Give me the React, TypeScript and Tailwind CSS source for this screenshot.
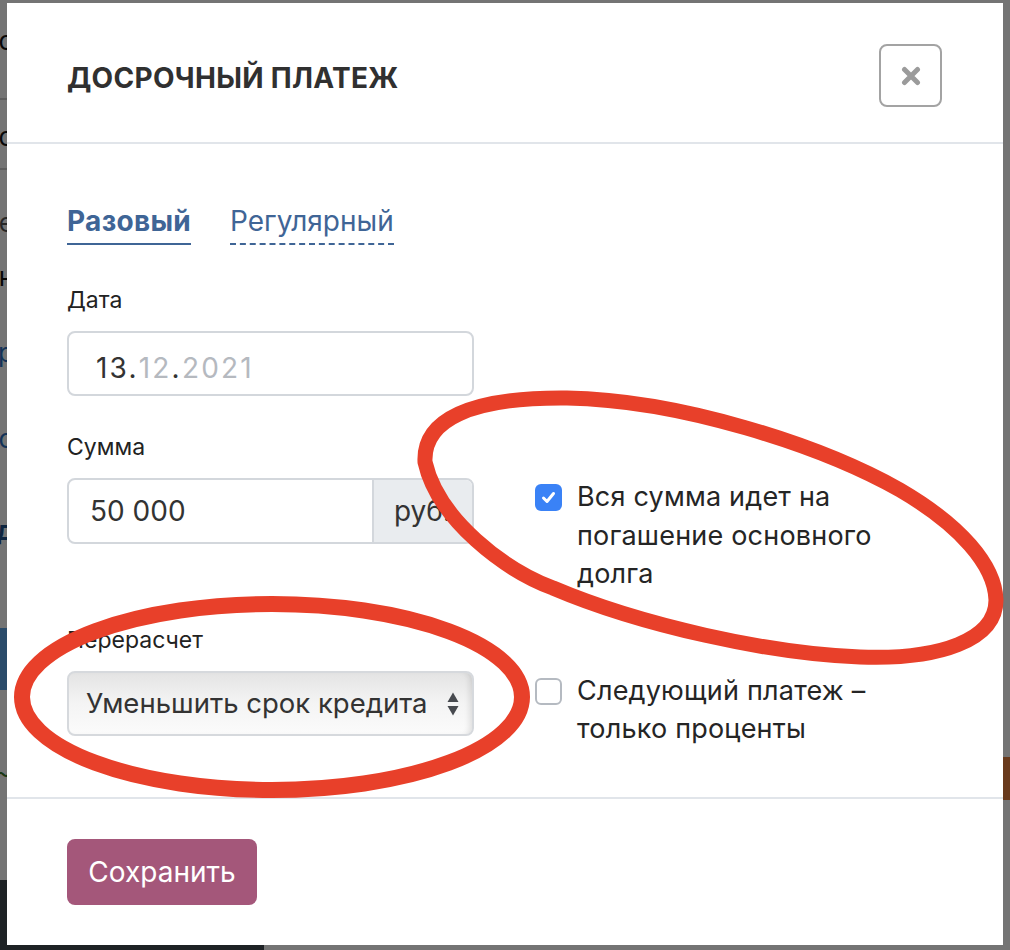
import React from "react";

function CloseIcon() {
  return (
    <svg width="20" height="20" viewBox="0 0 20 20">
      <path d="M3.5 3.5 L16.5 16.5 M16.5 3.5 L3.5 16.5" stroke="#9b9b9b" strokeWidth="5" strokeLinecap="round" />
    </svg>
  );
}

function SelectArrows() {
  return (
    <svg width="14" height="26" viewBox="0 0 14 26">
      <path d="M1.5 11 L7 1.5 L12.5 11 Z" fill="#474a4f" />
      <path d="M1.5 15 L12.5 15 L7 24.5 Z" fill="#474a4f" />
    </svg>
  );
}

function Annotations() {
  return (
    <svg className="pointer-events-none absolute left-0 top-0" width="1010" height="950" viewBox="0 0 1010 950">
      <path
        d="M425 462 C423 420 470 397 567 398 C680 400 820 445 900 490 C960 525 995 565 996 600 C996 640 940 660 860 657 C770 654 640 625 553 588 C505 570 438 520 425 462 Z"
        fill="none"
        stroke="#e8402a"
        strokeWidth="15"
      />
      <ellipse cx="272" cy="697" rx="250" ry="93" fill="none" stroke="#e8402a" strokeWidth="16" />
    </svg>
  );
}

export default function App() {
  return (
    <div className="relative h-[950px] w-[1010px] overflow-hidden bg-white font-['Inter','Noto_Sans',sans-serif] text-[#222]">
      {/* page behind the dialog */}
      <div className="flex h-[950px]">
        <div className="flex w-[264px] flex-col text-[26px] leading-none">
          <div className="flex h-[100px] justify-end border-b-2 border-[#cfcfcf] pr-[250px] pt-[28px] text-[#111]">со</div>
          <div className="flex h-[70px] justify-end border-b-2 border-[#cfcfcf] pr-[250px] pt-[24px] text-[#111]">о</div>
          <div className="flex h-[80px] justify-end pr-[250px] pt-[40px] text-[#555]">е</div>
          <div className="flex h-[60px] justify-end pr-[250px] pt-[14px] text-[#111]">н</div>
          <div className="flex h-[90px] justify-end pr-[250px] pt-[30px] text-[#2a6fc0]">р</div>
          <div className="flex h-[90px] justify-end pr-[250px] pt-[26px] text-[#2a6fc0]">о</div>
          <div className="flex h-[138px] justify-end pr-[250px] pt-[28px] font-bold text-[#1e4f8a]">д</div>
          <div className="h-[62px] bg-[#5ca6ea]" />
          <div className="flex h-[190px] justify-end pr-[252px] pt-[70px] text-[#3b7a2a]">~</div>
          <div className="flex-1 bg-[#434b52]" />
        </div>
        <div className="flex flex-1 flex-col">
          <div className="h-[880px]" />
          <div className="flex-1 border-t-2 border-[#333]" />
        </div>
        <div className="flex w-[20px] flex-col">
          <div className="h-[757px]" />
          <div className="h-[43px] rounded-l-[6px] bg-[#e6803e]" />
          <div className="flex-1" />
        </div>
      </div>

      {/* dimming backdrop */}
      <div className="absolute inset-0 bg-black/[0.545]" />

      {/* dialog */}
      <div className="absolute left-[7px] top-[3px] flex h-[942px] w-[996px] flex-col bg-white">
        <div className="flex h-[141px] shrink-0 items-center justify-between border-b-2 border-[#e1e5ea] pl-[60px] pr-[61px] pt-[6px]">
          <h2 className="mt-[5px] text-[28px] font-bold uppercase leading-[36px] tracking-[0.3px] text-[#303030]">
            Досрочный платеж
          </h2>
          <button className="flex h-[63px] w-[63px] items-center justify-center rounded-[8px] border-2 border-[#a3a3a3] bg-white">
            <CloseIcon />
          </button>
        </div>

        <div className="flex flex-1 gap-[61px] pl-[60px] pt-[60px]">
          <div className="flex w-[407px] flex-col">
            <div className="flex gap-[39px] text-[28px] leading-[34px] text-[#3f6596]">
              <span className="border-b-2 border-[#3f6596] pb-[5px] font-bold tracking-[0.3px]">Разовый</span>
              <span className="border-b-2 border-dashed border-[#3f6596] pb-[5px]">Регулярный</span>
            </div>

            <label className="mt-[39px] text-[23px] leading-[32px] text-[#222]">Дата</label>
            <div className="mt-[15px] flex h-[65px] items-center rounded-[8px] border-2 border-[#d3d7dc] pl-[27px] pt-[8px] text-[28px] tracking-[2.2px] text-[#333]">
              <span>13.</span>
              <span className="text-[#b5b9bf]">12</span>
              <span>.</span>
              <span className="text-[#b5b9bf]">2021</span>
            </div>

            <label className="mt-[35px] text-[23px] leading-[32px] text-[#222]">Сумма</label>
            <div className="mt-[15px] flex h-[66px] overflow-hidden rounded-[8px] border-2 border-[#d3d7dc] text-[28px] text-[#333]">
              <div className="flex flex-1 items-center pl-[21px]">50 000</div>
              <div className="flex w-[100px] shrink-0 items-center border-l-2 border-[#d3d7dc] bg-[#e9ecef] pl-[20px]">руб.</div>
            </div>

            <label className="mt-[80px] text-[23px] leading-[32px] text-[#222]">Перерасчет</label>
            <div className="mt-[15px] flex h-[65px] items-center justify-between rounded-[8px] border-2 border-[#d6d9dd] bg-gradient-to-b from-[#e4e4e4] via-[#f4f4f4] to-[#fbfbfb] pl-[17px] pr-[12px] text-[27.5px] text-[#333] shadow-[inset_-6px_0_6px_-4px_rgba(0,0,0,0.12)]">
              <span>Уменьшить срок кредита</span>
              <SelectArrows />
            </div>
          </div>

          <div className="flex flex-col pt-[274px] text-[27px] leading-[38.5px] tracking-[0.2px] text-[#252525]">
            <div className="flex gap-[15px]">
              <div className="mt-[6px] flex h-[27px] w-[27px] shrink-0 items-center justify-center rounded-[6px] bg-[#3a82f6]">
                <svg width="15" height="13" viewBox="0 0 15 13">
                  <path d="M2.5 7 L6 10.5 L12.5 2.5" fill="none" stroke="white" strokeWidth="3" strokeLinecap="round" strokeLinejoin="round" />
                </svg>
              </div>
              <div>
                Вся сумма идет на
                <br />
                погашение основного
                <br />
                долга
              </div>
            </div>
            <div className="mt-[78px] flex gap-[15px]">
              <div className="mt-[6px] h-[27px] w-[27px] shrink-0 rounded-[6px] border-2 border-[#b5bac1] bg-white" />
              <div>
                Следующий платеж –
                <br />
                только проценты
              </div>
            </div>
          </div>
        </div>

        <div className="flex h-[148px] shrink-0 items-center border-t-2 border-[#e1e5ea] pl-[60px]">
          <button className="flex h-[66px] w-[190px] items-center justify-center rounded-[8px] bg-[#a4577a] text-[28px] text-white">
            Сохранить
          </button>
        </div>
      </div>

      <Annotations />
    </div>
  );
}
